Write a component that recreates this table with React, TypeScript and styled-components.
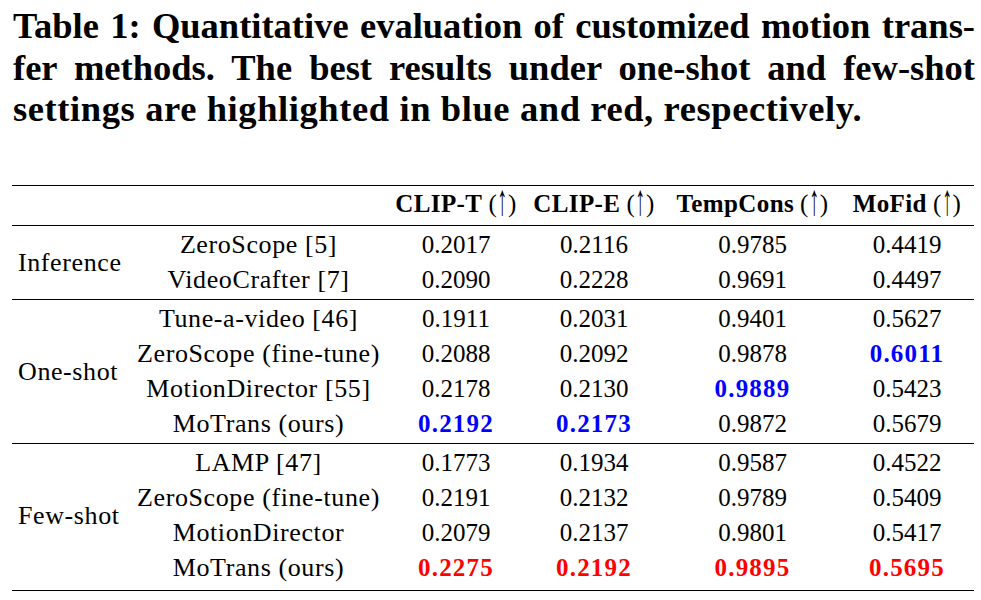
import React from 'react';
import styled, { createGlobalStyle } from 'styled-components';

const Global = createGlobalStyle`
  html, body { margin: 0; padding: 0; background: #fff; }
  body { font-family: "Liberation Serif", "Times New Roman", serif; color: #000; }
`;

const Page = styled.div`
  width: 981px;
  height: 600px;
  overflow: hidden;
`;

const Caption = styled.div`
  padding: 5px 6px 0 13px;
  font-size: 36.5px;
  font-weight: 700;
  line-height: 41.5px;
`;

const CaptionLine = styled.div<{ $last?: boolean }>`
  text-align: ${(p) => (p.$last ? 'left' : 'justify')};
  text-align-last: ${(p) => (p.$last ? 'left' : 'justify')};
  letter-spacing: ${(p) => (p.$last ? '0.6px' : '0')};
`;

const COLS = '116px 261px 134px 142px 175px 134px';

const Table = styled.div`
  margin: 55.5px 7px 0 12px;
  border-top: 1px solid #000;
  border-bottom: 1px solid #000;
`;

const HeaderRow = styled.div`
  display: grid;
  grid-template-columns: ${COLS};
  grid-template-rows: 35px;
  padding-bottom: 4px;
  border-bottom: 1px solid #000;
`;

const Group = styled.div<{ $rows: number; $pb: number }>`
  display: grid;
  grid-template-columns: ${COLS};
  grid-template-rows: repeat(${(p) => p.$rows}, 35px);
  padding: 1px 0 ${(p) => p.$pb}px;
  & + & {
    border-top: 1px solid #000;
  }
`;

const GroupLabel = styled.div`
  grid-column: 1;
  grid-row: 1 / -1;
  align-self: center;
  padding-left: 6px;
  font-size: 26px;
  line-height: 35px;
  letter-spacing: 0.6px;
  white-space: nowrap;
`;

const Method = styled.div`
  grid-column: 2;
  display: flex;
  justify-content: center;
  align-items: center;
  font-size: 26px;
  line-height: 35px;
  letter-spacing: 0.6px;
  white-space: nowrap;
`;

const Value = styled.div<{ $tone?: 'blue' | 'red' }>`
  display: flex;
  justify-content: center;
  align-items: center;
  font-size: 25px;
  line-height: 35px;
  white-space: nowrap;
  font-weight: ${(p) => (p.$tone ? 700 : 400)};
  letter-spacing: ${(p) => (p.$tone ? '1.2px' : '0')};
  color: ${(p) => (p.$tone === 'blue' ? '#0000ff' : p.$tone === 'red' ? '#ff0000' : '#000')};
`;

const HeadCell = styled.div`
  display: flex;
  justify-content: center;
  align-items: center;
  font-size: 25px;
  line-height: 35px;
  letter-spacing: 0.4px;
  white-space: nowrap;
`;

const HeadName = styled.span`
  font-weight: 700;
`;

const HeadArrow = styled.span`
  font-weight: 400;
  margin-left: 6px;
`;

const Arrow = styled.span`
  display: inline-block;
  transform: scale(0.8, 1.75);
  transform-origin: 50% 62%;
  margin: 0 -1px;
`;

type Tone = 'blue' | 'red' | undefined;
type Row = { method: string; values: [string, Tone][] };
type GroupData = { label: string; pb: number; rows: Row[] };

const headers = ['CLIP-T', 'CLIP-E', 'TempCons', 'MoFid'];

const groups: GroupData[] = [
  {
    label: 'Inference',
    pb: 2,
    rows: [
      { method: 'ZeroScope [5]', values: [['0.2017', undefined], ['0.2116', undefined], ['0.9785', undefined], ['0.4419', undefined]] },
      { method: 'VideoCrafter [7]', values: [['0.2090', undefined], ['0.2228', undefined], ['0.9691', undefined], ['0.4497', undefined]] },
    ],
  },
  {
    label: 'One-shot',
    pb: 2,
    rows: [
      { method: 'Tune-a-video [46]', values: [['0.1911', undefined], ['0.2031', undefined], ['0.9401', undefined], ['0.5627', undefined]] },
      { method: 'ZeroScope (fine-tune)', values: [['0.2088', undefined], ['0.2092', undefined], ['0.9878', undefined], ['0.6011', 'blue']] },
      { method: 'MotionDirector [55]', values: [['0.2178', undefined], ['0.2130', undefined], ['0.9889', 'blue'], ['0.5423', undefined]] },
      { method: 'MoTrans (ours)', values: [['0.2192', 'blue'], ['0.2173', 'blue'], ['0.9872', undefined], ['0.5679', undefined]] },
    ],
  },
  {
    label: 'Few-shot',
    pb: 5,
    rows: [
      { method: 'LAMP [47]', values: [['0.1773', undefined], ['0.1934', undefined], ['0.9587', undefined], ['0.4522', undefined]] },
      { method: 'ZeroScope (fine-tune)', values: [['0.2191', undefined], ['0.2132', undefined], ['0.9789', undefined], ['0.5409', undefined]] },
      { method: 'MotionDirector', values: [['0.2079', undefined], ['0.2137', undefined], ['0.9801', undefined], ['0.5417', undefined]] },
      { method: 'MoTrans (ours)', values: [['0.2275', 'red'], ['0.2192', 'red'], ['0.9895', 'red'], ['0.5695', 'red']] },
    ],
  },
];

export default function App() {
  return (
    <Page>
      <Global />
      <Caption>
        <CaptionLine>Table 1: Quantitative evaluation of customized motion trans-</CaptionLine>
        <CaptionLine>fer methods. The best results under one-shot and few-shot</CaptionLine>
        <CaptionLine $last>settings are highlighted in blue and red, respectively.</CaptionLine>
      </Caption>
      <Table>
        <HeaderRow>
          <div />
          <div />
          {headers.map((h) => (
            <HeadCell key={h}>
              <HeadName>{h}</HeadName>
              <HeadArrow>
                (<Arrow>↑</Arrow>)
              </HeadArrow>
            </HeadCell>
          ))}
        </HeaderRow>
        {groups.map((g) => (
          <Group key={g.label} $rows={g.rows.length} $pb={g.pb}>
            <GroupLabel>{g.label}</GroupLabel>
            {g.rows.map((r, i) => (
              <React.Fragment key={i}>
                <Method>{r.method}</Method>
                {r.values.map(([v, t], j) => (
                  <Value key={j} $tone={t}>
                    {v}
                  </Value>
                ))}
              </React.Fragment>
            ))}
          </Group>
        ))}
      </Table>
    </Page>
  );
}
